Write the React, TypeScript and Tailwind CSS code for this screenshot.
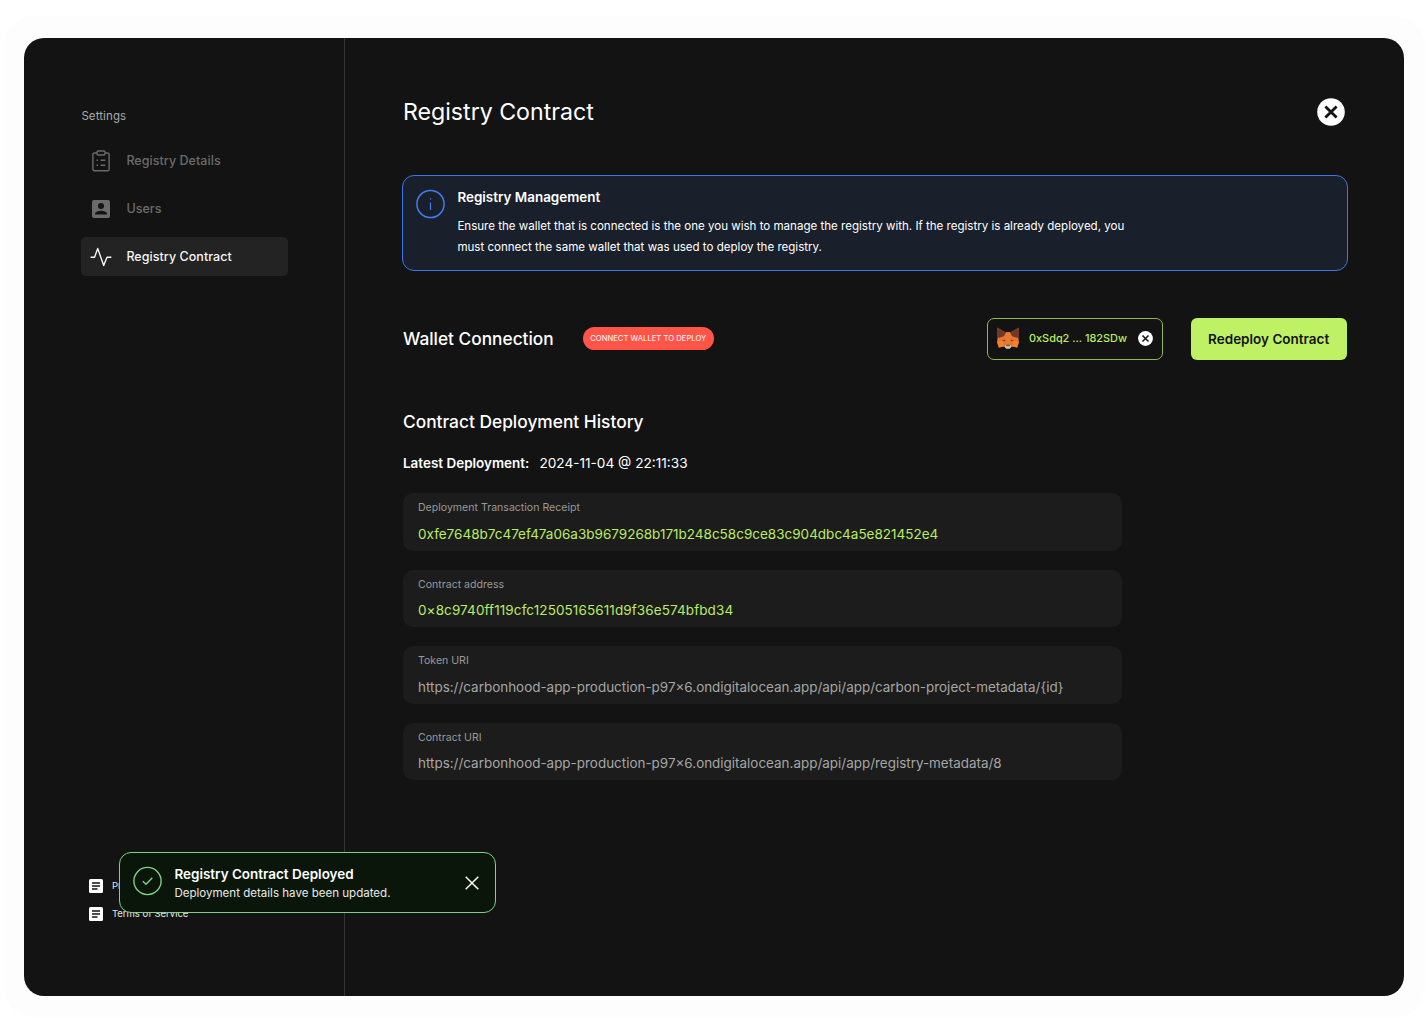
import { ReactNode } from "react";

function Fox() {
  return (
    <svg width="24" height="23" viewBox="-0.5 0 25 24">
      <path d="M0.5 0.8 L9 5.6 H15 L23.5 0.8 L22.8 10.5 L23.4 16 L21.6 21.4 L16.5 20.4 L13.6 21.5 H10.4 L7.5 20.4 L2.4 21.4 L0.6 16 L1.2 10.5Z" fill="#e8762d" />
      <path d="M0.6 0.6 L10 5.6 L7.8 9.6 L2 11.6 L0.6 7Z M23.4 0.6 L14 5.6 L16.2 9.6 L22 11.6 L23.4 7Z" fill="#713a26" />
      <path d="M10 5.6 H14 L15.5 10 L13.4 18 H10.6 L8.5 10Z" fill="#e87a35" />
      <path d="M0.6 15 L6.5 14.3 L8 19 L7.5 20.4 L2.4 21.4Z M23.4 15 L17.5 14.3 L16 19 L16.5 20.4 L21.6 21.4Z" fill="#f08228" />
      <path d="M5.6 14 L9.2 13 L8.8 14.8Z M18.4 14 L14.8 13 L15.2 14.8Z" fill="#71402b" />
      <path d="M8.3 20 L10 18.8 H14 L15.7 20 L14 22.8 H10Z" fill="#cfcac7" />
      <path d="M10.2 18.6 H13.8 L14.1 20 H9.9Z" fill="#625a57" />
    </svg>
  );
}

function CloseDisc({ size }: { size: number }) {
  return (
    <svg width={size} height={size} viewBox="0 0 28 28">
      <circle cx="14" cy="14" r="13.8" fill="#fff" />
      <path d="M8.4 8.4 L19.6 19.6 M19.6 8.4 L8.4 19.6" stroke="#131313" strokeWidth="2.8" />
    </svg>
  );
}

function DocIcon() {
  return (
    <svg width="14" height="14" viewBox="0 0 14 14">
      <rect width="14" height="14" rx="1.5" fill="#fff" />
      <path d="M3 4.1H11M3 7H11M3 9.9H8.5" stroke="#131313" strokeWidth="1.5" />
    </svg>
  );
}

function NavItem({ icon, label, active }: { icon: ReactNode; label: string; active?: boolean }) {
  return (
    <div className={`flex h-[39px] w-[206.5px] items-center rounded-[5px] pl-[8px] text-[12.5px] font-medium ${active ? "bg-[#232323] text-[#f5f5f5]" : "text-[#6b6b6b]"}`}>
      <span className="flex w-[23px] justify-center">{icon}</span>
      <span className="ml-[14px] pt-[2px] tracking-[0.05px]">{label}</span>
    </div>
  );
}

function Field({ label, value, kind }: { label: string; value: string; kind: "hash" | "address" | "uri" }) {
  const styles = {
    hash: "text-[13.5px] text-[#b9ec62]",
    address: "text-[13.5px] tracking-[0.1px] text-[#b9ec62]",
    uri: "text-[13.44px] text-[#a6a6a6]",
  };
  return (
    <div className="h-[57.5px] w-[719px] rounded-[10px] bg-[#1c1c1c] px-[15px] pt-[6px]">
      <div className="text-[10.57px] leading-[17px] text-[#999]">{label}</div>
      <div className={`mt-[7.5px] leading-[20px] ${styles[kind]}`}>{value}</div>
    </div>
  );
}

export default function App() {
  return (
    <div className="h-[1018px] w-[1426px] overflow-hidden bg-white pl-1 pt-4 font-['Inter',sans-serif] whitespace-nowrap">
      <div className="h-[1001px] w-[1421px] rounded-[30px] bg-[#fdfdfd] pl-5 pt-[22px]">
        <div className="relative flex h-[958px] w-[1380px] rounded-[20px] bg-[#131313]">
          <aside className="flex w-[321px] flex-col border-r border-[#343434] pl-[57.4px]">
            <div className="mt-[69px] text-[11.5px] leading-[18px] tracking-[0.1px] text-[#a9a9a9]">Settings</div>
            <nav className="mt-[16px] flex flex-col gap-[9px]">
              <NavItem label="Registry Details" icon={
                <svg width="18" height="22" viewBox="0 0 18 22" fill="none" stroke="currentColor" strokeWidth="1.4">
                  <path d="M5 3H2.5Q.9 3 .9 4.6V19.2Q.9 20.8 2.5 20.8H15.5Q17.1 20.8 17.1 19.2V4.6Q17.1 3 15.5 3H13" />
                  <rect x="5" y="1" width="8" height="4" rx="1.2" />
                  <path d="M4.6 10.3H6M8.6 10.3H13.4M4.6 15.2H6M8.6 15.2H13.4" />
                </svg>} />
              <NavItem label="Users" icon={
                <svg width="18" height="18" viewBox="0 0 18 18">
                  <rect width="18" height="18" rx="2" fill="currentColor" />
                  <circle cx="9" cy="6" r="3" fill="#131313" />
                  <path d="M3 14.5V13.7C3 11.7 6.8 10.7 9 10.7S15 11.7 15 13.7V14.5Z" fill="#131313" />
                </svg>} />
              <NavItem active label="Registry Contract" icon={
                <svg width="22" height="20" viewBox="0 0 22 20" fill="none" stroke="currentColor" strokeWidth="1.4" strokeLinejoin="round">
                  <path d="M.6 10.2H4.6L7.7 1.5L13.7 18.5L17 10.2H21.4" />
                </svg>} />
            </nav>
            <div className="mt-auto mb-[73.5px] flex flex-col gap-[10px] pl-[7.5px] text-[9.5px] leading-[18px] text-[#e5e5e5]">
              <div className="flex items-center gap-[9px]"><DocIcon />Privacy Policy</div>
              <div className="flex items-center gap-[9px]"><DocIcon />Terms of Service</div>
            </div>
          </aside>

          <main className="w-[1003px] pl-[58px] pt-[56px] text-white">
            <header className="flex h-9 items-center justify-between pr-[3px]">
              <h1 className="text-[23.15px] font-normal">Registry Contract</h1>
              <CloseDisc size={28} />
            </header>

            <section className="-ml-px mt-[45px] flex h-[95.5px] w-[946px] rounded-[12px] border border-[#3b76e8] bg-[#191f2b] pl-[13px]">
              <svg className="mt-[13px]" width="29" height="30" viewBox="0 0 29 30" fill="none" stroke="#3f7df1" strokeWidth="1.5">
                <circle cx="14.5" cy="15" r="13.6" />
                <path d="M14.5 13.5V21M14.5 9.3V10.6" strokeWidth="1.2" />
              </svg>
              <div className="ml-[12.4px] pt-[11px]">
                <h2 className="text-[13.45px] leading-5 font-semibold">Registry Management</h2>
                <p className="mt-[9px] text-[11.56px] leading-[21px]">
                  Ensure the wallet that is connected is the one you wish to manage the registry with. If the registry is already deployed, you<br />
                  must connect the same wallet that was used to deploy the registry.
                </p>
              </div>
            </section>

            <section className="mt-[46.5px] flex h-[43px] items-center">
              <h2 className="w-[179.5px] text-[17.3px] font-medium">Wallet Connection</h2>
              <span className="flex h-[23px] w-[131.5px] items-center justify-center rounded-full bg-[#ff5548] text-[7.7px]">CONNECT WALLET TO DEPLOY</span>
              <div className="ml-auto flex h-[42px] w-[176.5px] items-center rounded-[7px] border border-[#8fb84e] pl-2 text-[10.9px] font-medium text-[#b9ec62]">
                <Fox />
                <span className="ml-[9.5px] flex-1">0xSdq2 ... 182SDw</span>
                <span className="mr-[9.5px]"><CloseDisc size={15} /></span>
              </div>
              <button className="mr-[0.6px] ml-[28.4px] h-[42px] w-[156px] rounded-[6px] bg-[#bff164] pt-px pr-[1.5px] text-[13.5px] font-semibold text-[#131313]">Redeploy Contract</button>
            </section>

            <h2 className="mt-[49px] text-[17.33px] leading-[26px] font-medium">Contract Deployment History</h2>
            <div className="mt-[18px] flex gap-[10px] text-[13.48px] leading-5">
              <span className="font-semibold">Latest Deployment:</span>
              <span className="text-[13.65px]">2024-11-04 @ 22:11:33</span>
            </div>
            <div className="mt-[20px] flex flex-col gap-[19.1px]">
              <Field kind="hash" label="Deployment Transaction Receipt" value="0xfe7648b7c47ef47a06a3b9679268b171b248c58c9ce83c904dbc4a5e821452e4" />
              <Field kind="address" label="Contract address" value="0×8c9740ff119cfc12505165611d9f36e574bfbd34" />
              <Field kind="uri" label="Token URI" value="https://carbonhood-app-production-p97x6.ondigitalocean.app/api/app/carbon-project-metadata/{id}" />
              <Field kind="uri" label="Contract URI" value="https://carbonhood-app-production-p97x6.ondigitalocean.app/api/app/registry-metadata/8" />
            </div>
          </main>

          <div className="absolute top-[814px] left-[95px] flex h-[61px] w-[377px] items-center rounded-[12px] border border-[#7fd18a] bg-[#0a160a] pl-[13px] text-white">
            <svg className="mb-[3px]" width="29" height="30" viewBox="0 0 29 30" fill="none" stroke="#7fd18a" strokeWidth="1.4">
              <circle cx="14.5" cy="15" r="13.6" />
              <path d="M9.8 15.2L13 18.2L19.3 11.8" />
            </svg>
            <div className="ml-[12.4px]">
              <div className="text-[13.48px] leading-5 font-semibold">Registry Contract Deployed</div>
              <div className="text-[11.55px] leading-[18px] text-[#e8e8e8]">Deployment details have been updated.</div>
            </div>
            <svg className="mr-4 ml-auto" width="14" height="14" viewBox="0 0 14 14" stroke="#fff" strokeWidth="1.5">
              <path d="M.7 .7L13.3 13.3M13.3 .7L.7 13.3" />
            </svg>
          </div>
        </div>
      </div>
    </div>
  );
}
